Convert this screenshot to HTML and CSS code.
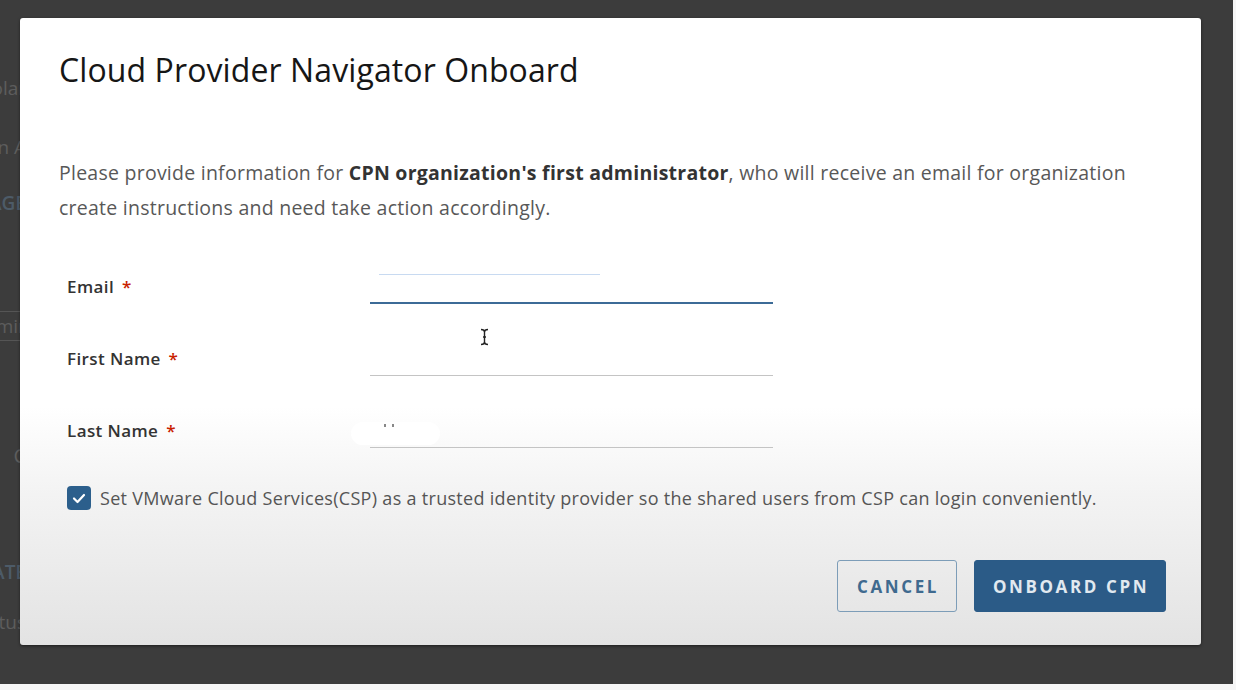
FILE: index.html
```html
<!DOCTYPE html>
<html lang="en">
<head>
<meta charset="utf-8">
<title>Cloud Provider Navigator Onboard</title>
<link rel="stylesheet" href="styles.css">
</head>
<body>
<div class="screen">
  <div class="page">
    <div class="bg-item t1"><span>Solar</span></div>
    <div class="bg-item t2"><span>Region A</span></div>
    <div class="bg-item t3 link"><span>MANAGE</span></div>
    <div class="bg-item t4 box"><span>Admin</span></div>
    <div class="bg-item t5 small"><span>C</span></div>
    <div class="bg-item t6 link"><span>CREATE</span></div>
    <div class="bg-item t7"><span>Status</span></div>
  </div>

  <div class="modal" role="dialog" aria-labelledby="dlg-title">
    <h1 class="title" id="dlg-title">Cloud Provider Navigator Onboard</h1>
    <p class="intro">Please provide information for <b>CPN organization's first administrator</b>, who will receive an email for organization create instructions and need take action accordingly.</p>

    <div class="fields">
      <div class="row">
        <label class="label">Email <span class="req">*</span></label>
        <div class="field focus">
          <span class="ghost"></span>
        </div>
      </div>
      <div class="row">
        <label class="label">First Name <span class="req">*</span></label>
        <div class="field">
          <svg class="ibeam" width="9" height="18" viewBox="0 0 9 18" aria-hidden="true">
            <path d="M1 1.5 Q4.5 1.5 4.5 4 L4.5 14 Q4.5 16.5 1 16.5 M8 1.5 Q4.5 1.5 4.5 4 M8 16.5 Q4.5 16.5 4.5 14 M3 9 H6" fill="none" stroke="#222" stroke-width="1.4"/>
          </svg>
        </div>
      </div>
      <div class="row">
        <label class="label">Last Name <span class="req">*</span></label>
        <div class="field">
          <span class="blob"><i></i><i></i></span>
        </div>
      </div>
    </div>

    <label class="check">
      <span class="box-check">
        <svg width="14" height="11" viewBox="0 0 14 11" aria-hidden="true"><path d="M2 5.5 L5.5 9 L12 2" fill="none" stroke="#fff" stroke-width="2.2" stroke-linecap="round" stroke-linejoin="round"/></svg>
      </span>
      <span class="check-text">Set VMware Cloud Services(CSP) as a trusted identity provider so the shared users from CSP can login conveniently.</span>
    </label>

    <div class="actions">
      <button class="btn btn-outline" type="button">CANCEL</button>
      <button class="btn btn-primary" type="button">ONBOARD CPN</button>
    </div>
  </div>
</div>
</body>
</html>
```

FILE: styles.css
```css
* { box-sizing: border-box; }

html, body {
  margin: 0;
  padding: 0;
  background: #f6f6f6;
  width: 1236px;
  height: 690px;
  overflow: hidden;
}

body {
  font-family: "Open Sans", "Liberation Sans", sans-serif;
}

.screen {
  position: relative;
  width: 1233px;
  height: 684px;
  background: #3c3c3c;
  overflow: hidden;
}

/* dimmed page behind the modal */
.page {
  display: flex;
  flex-direction: column;
  padding-top: 76px;
}

.bg-item {
  width: 26px;
  display: flex;
  justify-content: flex-end;
  overflow: hidden;
  white-space: nowrap;
  font-size: 19px;
  line-height: 24px;
  color: #5d5d5d;
}

.bg-item.link { color: #4d5b68; font-weight: 600; }
.t2 { margin-top: 35px; }
.t3 { margin-top: 32px; }
.t4 {
  margin-top: 96px;
  height: 30px;
  width: 40px;
  border: 1px solid #555;
  border-left: 0;
  align-items: center;
  justify-content: flex-start;
}
.t4 span { margin-left: -28px; }
.t5 { margin-top: 103px; font-size: 20px; }
.t6 { margin-top: 92px; }
.t7 { margin-top: 26px; }

/* modal */
.modal {
  position: absolute;
  left: 20px;
  top: 18px;
  width: 1181px;
  height: 627px;
  border-radius: 3px;
  background: linear-gradient(to bottom, #ffffff 0%, #ffffff 62%, #f3f3f3 76%, #e3e3e3 100%);
  box-shadow: 0 1px 3px rgba(0, 0, 0, 0.5);
  padding: 33px 35px 33px 39px;
  display: flex;
  flex-direction: column;
}

.title {
  margin: 0;
  font-size: 32px;
  line-height: 38px;
  font-weight: 400;
  color: #161616;
  letter-spacing: 0.1px;
}

.intro {
  margin: 66px 0 0;
  font-size: 19.5px;
  line-height: 35px;
  letter-spacing: 0.25px;
  color: #585858;
  max-width: 1095px;
}

.intro b {
  font-weight: 700;
  color: #333;
}

.fields {
  margin-top: 42px;
  display: flex;
  flex-direction: column;
  gap: 35px;
}

.row {
  display: grid;
  grid-template-columns: 311px 403px;
  align-items: center;
}

.label {
  padding-left: 8px;
  padding-top: 1px;
  font-size: 17px;
  font-weight: 600;
  letter-spacing: 0.4px;
  color: #333;
}

.req {
  color: #c92100;
  margin-left: 3px;
}

.field {
  position: relative;
  height: 37px;
  border-bottom: 1px solid #c4c4c4;
}

.field.focus {
  border-bottom: 2px solid #3c6b97;
}

.ghost {
  position: absolute;
  left: 9px;
  top: 7px;
  width: 221px;
  height: 1px;
  background: #c8daf1;
}

.ibeam {
  position: absolute;
  left: 110px;
  top: -11px;
}

.blob {
  position: absolute;
  left: -19px;
  top: 11px;
  width: 89px;
  height: 23px;
  border-radius: 12px;
  background: #fff;
  display: flex;
  gap: 6px;
  padding: 2px 0 0 33px;
}

.blob i {
  width: 2px;
  height: 3px;
  background: #888;
}

.check {
  margin-top: 38px;
  padding-left: 8px;
  display: flex;
  align-items: center;
  gap: 9px;
}

.box-check {
  width: 24px;
  height: 24px;
  border-radius: 4px;
  background: #2c5f8c;
  display: flex;
  align-items: center;
  justify-content: center;
  flex: none;
}

.check-text {
  font-size: 18px;
  letter-spacing: 0.3px;
  color: #555;
  line-height: 24px;
}

.actions {
  margin-top: auto;
  display: flex;
  justify-content: flex-end;
  gap: 17px;
}

.btn {
  height: 52px;
  border-radius: 3px;
  font-family: "Open Sans", "Liberation Sans", sans-serif;
  font-size: 17px;
  font-weight: 700;
  letter-spacing: 2.6px;
  padding: 0 0 0 2px;
  cursor: pointer;
}

.btn-outline {
  width: 120px;
  background: transparent;
  border: 1.5px solid #7d9db8;
  color: #3f6a8f;
}

.btn-primary {
  width: 192px;
  background: #2b5b87;
  border: 1px solid #2b5b87;
  color: #e1e9f0;
}
```
